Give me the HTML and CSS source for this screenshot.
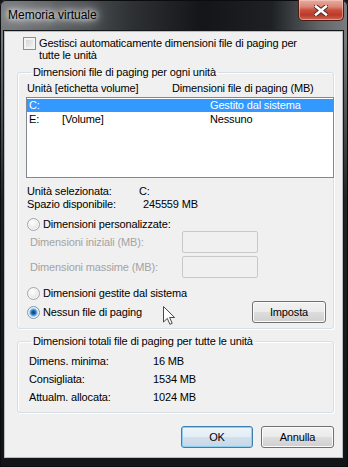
FILE: index.html
```html
<!DOCTYPE html>
<html lang="it">
	<head>
		<meta charset="UTF-8">
		<title>Memoria virtuale</title>
		<link rel="stylesheet" href="styles.css">
	</head>
	<body>
		<div class="window">
			<div class="titlebar">
				<span class="title">Memoria virtuale</span>
				<span class="close">
					<svg width="14" height="11" viewBox="0 0 14 11">
						<path d="M2 1.5 L12 9.5 M12 1.5 L2 9.5" stroke="#3a2a28" stroke-width="4.4" stroke-linecap="square"/>
						<path d="M2 1.5 L12 9.5 M12 1.5 L2 9.5" stroke="#ffffff" stroke-width="2.6" stroke-linecap="square"/>
					</svg>
				</span>
			</div>
			<div class="client">
				<div class="check-row">
					<span class="checkbox"></span>
					<label>Gestisci automaticamente dimensioni file di paging per<br>tutte le unità</label>
				</div>

				<fieldset class="group group-drives">
					<legend>Dimensioni file di paging per ogni unità</legend>
					<div class="list-head">
						<span class="head-drive">Unità [etichetta volume]</span>
						<span>Dimensioni file di paging (MB)</span>
					</div>
					<div class="listbox">
						<div class="row selected">
							<span>C:</span><span></span><span>Gestito dal sistema</span>
						</div>
						<div class="row">
							<span>E:</span><span>[Volume]</span><span>Nessuno</span>
						</div>
					</div>
					<div class="info">
						<span>Unità selezionata:</span><span>C:</span>
						<span>Spazio disponibile:</span><span class="free">245559 MB</span>
					</div>
					<div class="radio-row first">
						<span class="radio"></span>
						<span>Dimensioni personalizzate:</span>
					</div>
					<div class="size-row">
						<span class="size-label">Dimensioni iniziali (MB):</span>
						<span class="textbox"></span>
					</div>
					<div class="size-row second">
						<span class="size-label">Dimensioni massime (MB):</span>
						<span class="textbox"></span>
					</div>
					<div class="radio-row system">
						<span class="radio"></span>
						<span>Dimensioni gestite dal sistema</span>
					</div>
					<div class="radio-row none">
						<span class="radio checked"></span>
						<span>Nessun file di paging</span>
						<button class="btn set">Imposta</button>
					</div>
				</fieldset>

				<fieldset class="group group-total">
					<legend>Dimensioni totali file di paging per tutte le unità</legend>
					<div class="totals">
						<span>Dimens. minima:</span><span>16 MB</span>
						<span>Consigliata:</span><span>1534 MB</span>
						<span>Attualm. allocata:</span><span>1024 MB</span>
					</div>
				</fieldset>

				<div class="buttons">
					<button class="btn default">OK</button>
					<button class="btn">Annulla</button>
				</div>
			</div>

			<svg class="cursor" width="13" height="20" viewBox="0 0 13 20">
				<path d="M0.5 0.5 L0.5 16 L4.3 12.4 L6.9 18.3 L9.2 17.3 L6.6 11.5 L11.6 11.5 Z" fill="#ffffff" stroke="#4a4a4a" stroke-width="1" stroke-linejoin="round"/>
			</svg>
		</div>
	</body>
</html>
```

FILE: styles.css
```css
*{
	box-sizing: border-box;
}
body{
	margin: 0;
	background: #0f1114;
	font: 11px/13px "Liberation Sans", Arial, sans-serif;
	letter-spacing: -0.15px;
	color: #000;
}
.window{
	position: relative;
	width: 348px;
	height: 467px;
	display: flex;
	flex-direction: column;
	border-radius: 6px 6px 0 0;
	background:
		linear-gradient(to bottom, rgba(16,18,21,0) 40px, rgba(16,18,21,0.85) 200px, #121417 440px),
		linear-gradient(to right, #76797c 0%, #616467 14%, #2e3134 38%, #131518 58%, #1e2124 78%, #636669 92%, #7a7c7f 100%);
	box-shadow: inset 0 0 0 1px #0b0c0e;
}

/* title bar */
.titlebar{
	height: 31px;
	display: flex;
	justify-content: space-between;
	align-items: flex-start;
}
.title{
	margin: 9px 0 0 8px;
	font-size: 12px;
	letter-spacing: 0;
	color: #000;
	text-shadow: 0 0 5px #fff, 0 0 9px #fff, 0 0 14px rgba(255,255,255,0.9), 0 0 22px rgba(255,255,255,0.8);
}
.close{
	width: 46px;
	height: 21px;
	margin-right: 4px;
	display: flex;
	align-items: center;
	justify-content: center;
	padding-top: 1px;
	border: 1px solid #4a1c15;
	border-top: none;
	border-radius: 0 0 5px 5px;
	background: linear-gradient(#e7ada0 0%, #d98474 35%, #c9503c 50%, #b9392a 75%, #cf6a51 100%);
	box-shadow: inset 0 0 0 1px rgba(255,220,210,0.45);
}

/* client area */
.client{
	margin: 0 5px 0 4px;
	height: 427px;
	background: #f0f0f0;
	border: 1px solid #b9bdc1;
	box-shadow: 0 0 0 1px #15181b;
	padding: 0 8px 0 0;
}
.check-row{
	display: flex;
	align-items: flex-start;
	gap: 3px;
	margin: 5px 0 0 18px;
	line-height: 12px;
}
.checkbox{
	width: 13px;
	height: 13px;
	flex: none;
	border: 1px solid #8e8f8f;
	background: linear-gradient(135deg, #cdd0d4, #f6f6f6);
	box-shadow: inset 0 0 0 2px #f3f3f3;
}

/* group boxes */
.group{
	margin: 5px 0 0 12px;
	width: 317px;
	border: 1px solid #d5dfe5;
	border-radius: 3px;
	box-shadow: 1px 1px 0 #fff, inset 1px 1px 0 #fff;
	padding: 3px 0 5px 8px;
	min-width: 0;
}
.group legend{
	padding: 0 2px;
	margin-left: 5px;
	line-height: 13px;
}
.list-head{
	display: flex;
	padding-left: 1px;
}
.head-drive{
	width: 145px;
}
.listbox{
	margin-top: 2px;
	width: 308px;
	height: 81px;
	border: 1px solid #828790;
	background: #fff;
	padding-top: 1px;
}
.row{
	display: grid;
	grid-template-columns: 33px 148px 1fr;
	height: 14px;
	padding-left: 2px;
	line-height: 13px;
}
.row.selected{
	background: linear-gradient(#3399ff 13px, transparent 13px);
	color: #fff;
}
.info{
	margin-top: 7px;
	display: grid;
	grid-template-columns: 112px 1fr;
	padding-left: 1px;
}
.info .free{
	padding-left: 4px;
}

/* radios and sizes */
.radio-row{
	display: flex;
	align-items: center;
	gap: 3px;
	margin-left: 1px;
	height: 13px;
}
.radio-row.first{
	margin-top: 7px;
}
.radio-row.system{
	margin-top: 9px;
}
.radio-row.none{
	margin-top: 1px;
	height: 22px;
}
.radio{
	width: 13px;
	height: 13px;
	flex: none;
	border-radius: 50%;
	border: 1px solid #a4a6a9;
	background: radial-gradient(circle at 40% 35%, #fdfdfd 0, #eeeeee 45%, #d6d7d9 100%);
	box-shadow: inset 0 0 0 1px #f8f8f8;
}
.radio.checked{
	border-color: #7f98ad;
	background: radial-gradient(circle, #0d3f73 0, #1f63a8 1.8px, #4f9ad8 3px, #a9d4f3 4px, #eef3f7 4.8px, #dcdee0 100%);
	box-shadow: none;
}
.size-row{
	display: flex;
	align-items: center;
	height: 22px;
	margin-left: 4px;
	color: #a3a3a3;
}
.size-row.second{
	margin-top: 3px;
}
.size-label{
	width: 152px;
}
.textbox{
	width: 76px;
	height: 22px;
	border: 1px solid #c6c9cc;
	border-radius: 2px;
	background: #f0f0f0;
}

/* buttons */
.btn{
	height: 22px;
	padding: 0;
	font: inherit;
	letter-spacing: inherit;
	color: #000;
	border: 1px solid #707070;
	border-radius: 3px;
	background: linear-gradient(#f2f2f2 0%, #ebebeb 48%, #dddddd 52%, #cfcfcf 100%);
	box-shadow: inset 0 0 0 1px #fbfbfb;
}
.btn.set{
	width: 74px;
	margin: 0 7px 0 auto;
}
.btn.default{
	border-color: #3c7fb1;
	background: linear-gradient(#eef5fa 0%, #e3edf5 48%, #d2e0ec 52%, #c6d7e6 100%);
	box-shadow: inset 0 0 0 1px #8fd0f2;
}

/* totals */
.group-total{
	margin-top: 6px;
	padding: 4px 0 6px 8px;
}
.totals{
	display: grid;
	grid-template-columns: 124px 1fr;
	grid-auto-rows: 18px;
	align-items: center;
	padding-left: 3px;
}

.buttons{
	display: flex;
	justify-content: flex-end;
	gap: 8px;
	margin-top: 13px;
}
.buttons .btn{
	width: 72px;
}
.buttons .btn + .btn{
	width: 73px;
}

/* mouse pointer over the dialog */
.cursor{
	position: absolute;
	left: 163px;
	top: 306px;
}
```
